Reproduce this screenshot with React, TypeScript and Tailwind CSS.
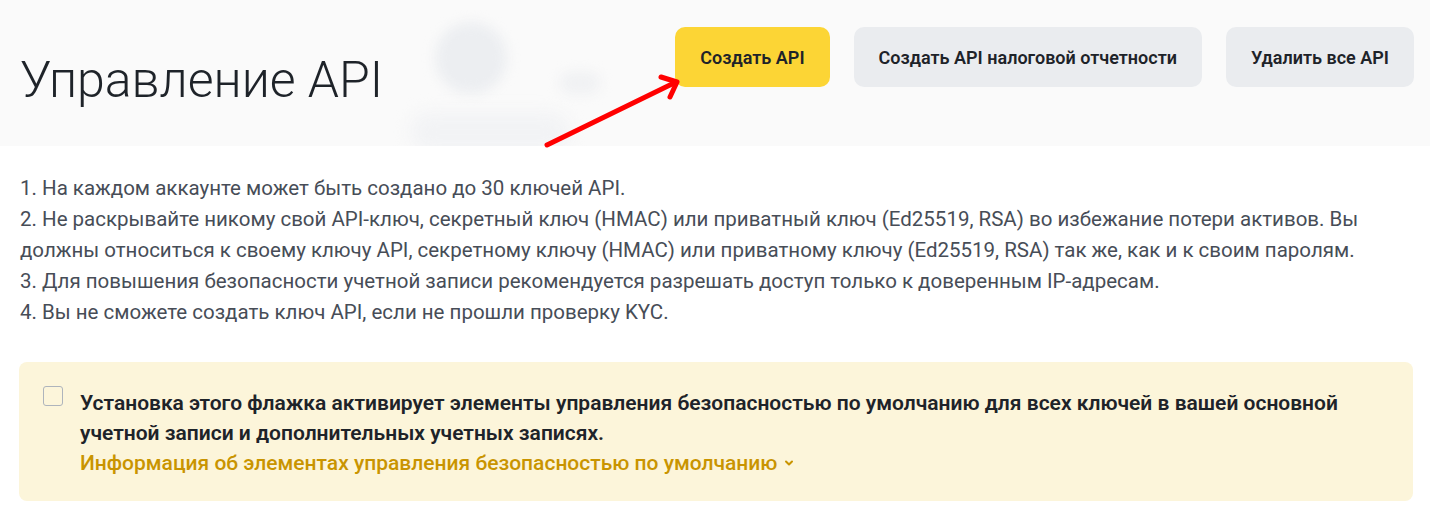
import React from "react";

const font = { fontFamily: "Roboto, 'Noto Sans', sans-serif" };

function Header() {
  return (
    <div className="relative h-[146px] bg-[#fafafa] overflow-hidden">
      {/* размытые фигуры фона */}
      <div className="absolute left-[435px] top-[22px] w-[72px] h-[72px] rounded-full bg-[#eceef1] blur-[6px]" />
      <div className="absolute left-[560px] top-[72px] w-[40px] h-[22px] rounded-full bg-[#f0f1f3] blur-[6px]" />
      <div className="absolute left-[410px] top-[112px] w-[160px] h-[40px] rounded-full bg-[#f2f3f5] blur-[8px]" />

      <div className="relative flex items-start justify-between pl-[20px] pr-[16px]">
        <h1 className="mt-[51px] text-[50px] leading-[58px] font-light text-[#1e2329]">
          Управление API
        </h1>
        <div className="flex gap-[24px] pt-[27px]">
          <button className="h-[60px] px-[25px] rounded-[10px] bg-[#fcd535] text-[18px] font-semibold text-[#1e2329]">
            Создать API
          </button>
          <button className="h-[60px] px-[25px] rounded-[10px] bg-[#eaecef] text-[18px] font-semibold text-[#1e2329]">
            Создать API налоговой отчетности
          </button>
          <button className="h-[60px] px-[25px] rounded-[10px] bg-[#eaecef] text-[18px] font-semibold text-[#1e2329]">
            Удалить все API
          </button>
        </div>
      </div>
    </div>
  );
}

function Arrow() {
  return (
    <svg className="absolute left-0 top-0 pointer-events-none" width="1430" height="521">
      <line x1="547" y1="145" x2="672" y2="84" stroke="#ff0000" strokeWidth="5" strokeLinecap="round" />
      <polyline points="661,77 677,82 670,97" fill="none" stroke="#ff0000" strokeWidth="5" strokeLinecap="round" strokeLinejoin="round" />
    </svg>
  );
}

export default function App() {
  return (
    <div className="relative w-[1430px] h-[521px] bg-white overflow-hidden" style={font}>
      <Header />
      <div className="px-[20px] pt-[27px] text-[20.5px] leading-[31px] text-[#474d57]">
        <p>1. На каждом аккаунте может быть создано до 30 ключей API.</p>
        <p>
          2. Не раскрывайте никому свой API-ключ, секретный ключ (HMAC) или приватный ключ (Ed25519, RSA) во избежание потери активов. Вы
          <br />
          должны относиться к своему ключу API, секретному ключу (HMAC) или приватному ключу (Ed25519, RSA) так же, как и к своим паролям.
        </p>
        <p>3. Для повышения безопасности учетной записи рекомендуется разрешать доступ только к доверенным IP-адресам.</p>
        <p>4. Вы не сможете создать ключ API, если не прошли проверку KYC.</p>
      </div>

      <div className="mx-[19px] mt-[34px] w-[1394px] rounded-[8px] bg-[#fcf5da] px-[24px] pt-[24px] pb-[23px] flex gap-[17px]">
        <div className="w-[20px] h-[20px] shrink-0 rounded-[3px] border-[1.5px] border-[#aeb4bc]" />
        <div className="mt-[2px]">
          <p className="text-[21px] leading-[30px] font-semibold text-[#1e2329]">
            Установка этого флажка активирует элементы управления безопасностью по умолчанию для всех ключей в вашей основной
            <br />
            учетной записи и дополнительных учетных записях.
          </p>
          <p className="flex items-center gap-[7px] text-[21px] leading-[30px] font-medium text-[#c99400]">
            Информация об элементах управления безопасностью по умолчанию
            <svg width="10" height="10" viewBox="0 0 10 10">
              <polyline points="2,3.5 5,6.5 8,3.5" fill="none" stroke="#c99400" strokeWidth="2" strokeLinecap="round" strokeLinejoin="round" />
            </svg>
          </p>
        </div>
      </div>
      <Arrow />
    </div>
  );
}
